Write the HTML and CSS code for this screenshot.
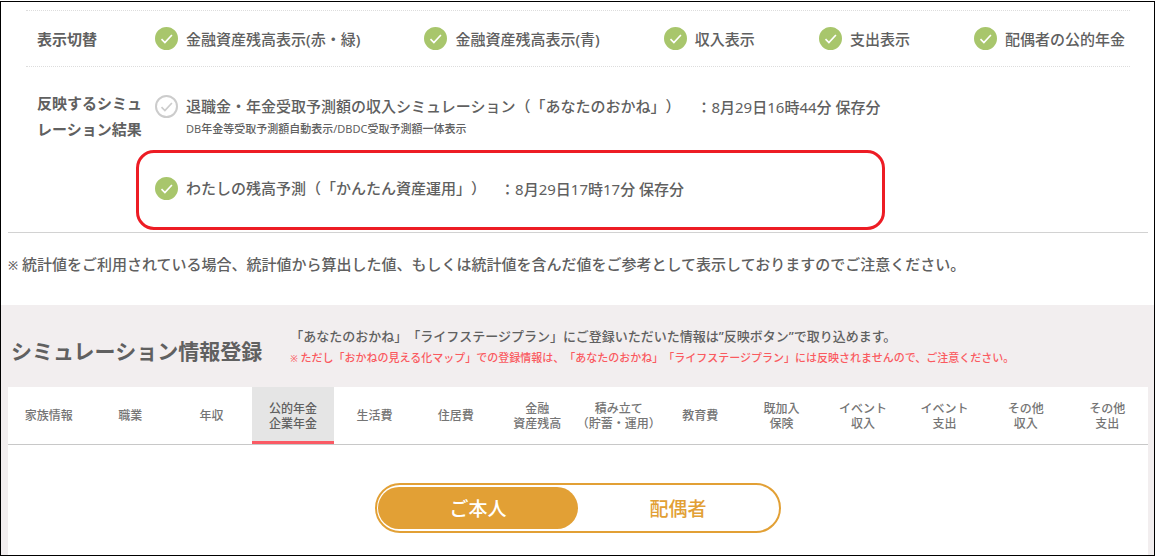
FILE: index.html
```html
<!DOCTYPE html>
<html lang="ja">
<head>
    <meta charset="UTF-8">
    <meta name="viewport" content="width=device-width, initial-scale=1.0">
    <title>シミュレーション情報登録</title>
    <link rel="stylesheet" href="styles.css">
</head>
<body>
    <div class="page">
        <!-- Display switches -->
        <section class="settings">
            <div class="switch-row">
                <h2 class="row-label">表示切替</h2>
                <div class="switches">
                    <label class="option"><input type="checkbox" class="check" checked>金融資産残高表示(赤・緑)</label>
                    <label class="option"><input type="checkbox" class="check" checked>金融資産残高表示(青)</label>
                    <label class="option"><input type="checkbox" class="check" checked>収入表示</label>
                    <label class="option"><input type="checkbox" class="check" checked>支出表示</label>
                    <label class="option"><input type="checkbox" class="check" checked>配偶者の公的年金</label>
                </div>
            </div>

            <!-- Simulation results to reflect -->
            <div class="result-row">
                <h2 class="row-label">反映するシミュレーション結果</h2>
                <div class="results">
                    <div class="result">
                        <label class="option"><input type="checkbox" class="check">退職金・年金受取予測額の収入シミュレーション（「あなたのおかね」）</label>
                        <span class="saved">：<span class="num">8</span>月<span class="num">29</span>日<span class="num">16</span>時<span class="num">44</span>分 保存分</span>
                    </div>
                    <p class="result-note"><span class="num">DB</span>年金等受取予測額自動表示<span class="num">/DBDC</span>受取予測額一体表示</p>
                    <div class="result highlight">
                        <label class="option"><input type="checkbox" class="check" checked>わたしの残高予測（「かんたん資産運用」）</label>
                        <span class="saved">：<span class="num">8</span>月<span class="num">29</span>日<span class="num">17</span>時<span class="num">17</span>分 保存分</span>
                    </div>
                </div>
            </div>
        </section>

        <p class="caution"><span class="mark">※</span> 統計値をご利用されている場合、統計値から算出した値、もしくは統計値を含んだ値をご参考として表示しておりますのでご注意ください。</p>

        <!-- Registration -->
        <section class="register">
            <header class="register-head">
                <h1 class="title">シミュレーション情報登録</h1>
                <div class="notes">
                    <p class="note">「あなたのおかね」「ライフステージプラン」にご登録いただいた情報は”反映ボタン”で取り込めます。</p>
                    <p class="note-red"><span class="mark">※</span> ただし「おかねの見える化マップ」での登録情報は、「あなたのおかね」「ライフステージプラン」には反映されませんので、ご注意ください。</p>
                </div>
            </header>

            <div class="panel">
                <nav class="tabs">
                    <a href="#" class="tab">家族情報</a>
                    <a href="#" class="tab">職業</a>
                    <a href="#" class="tab">年収</a>
                    <a href="#" class="tab active">公的年金<br>企業年金</a>
                    <a href="#" class="tab">生活費</a>
                    <a href="#" class="tab">住居費</a>
                    <a href="#" class="tab">金融<br>資産残高</a>
                    <a href="#" class="tab">積み立て<br>（貯蓄・運用）</a>
                    <a href="#" class="tab">教育費</a>
                    <a href="#" class="tab">既加入<br>保険</a>
                    <a href="#" class="tab">イベント<br>収入</a>
                    <a href="#" class="tab">イベント<br>支出</a>
                    <a href="#" class="tab">その他<br>収入</a>
                    <a href="#" class="tab">その他<br>支出</a>
                </nav>

                <div class="person-switch">
                    <button type="button" class="person selected">ご本人</button>
                    <button type="button" class="person">配偶者</button>
                </div>
            </div>
        </section>
    </div>
</body>
</html>
```
FILE: styles.css
```css
* {
    box-sizing: border-box;
}

body {
    font-family: "Noto Sans", "Noto Sans CJK JP", sans-serif;
    font-size: 15px;
    font-weight: 500;
    text-spacing-trim: space-all;
    color: #606060;
    background-color: #ffffff;
    margin: 0;
    padding: 1px 0;
    min-height: 100vh;
    display: flex;
}

h1, h2, p {
    margin: 0;
}

.page {
    flex: 1;
    min-width: 0;
    border: 1px solid #000000;
    display: flex;
    flex-direction: column;
}

/* Display switches and results */
.settings {
    margin: 8px 6px 0 7px;
    border-bottom: 1px solid #d2d2d2;
}

.switch-row,
.result-row {
    display: grid;
    grid-template-columns: 118px 1fr;
    margin: 0 18px;
    padding: 0 5px 0 11px;
}

.switch-row {
    align-items: center;
    height: 57px;
    border-top: 1px dotted #dddddd;
    border-bottom: 1px dotted #dddddd;
}

.row-label {
    font-size: 15px;
    font-weight: bold;
    line-height: 26px;
    padding-right: 12px;
}

.switches {
    display: flex;
    justify-content: space-between;
}

.option {
    display: flex;
    align-items: center;
    gap: 8px;
    line-height: 24px;
    white-space: nowrap;
    cursor: pointer;
}

/* Round check mark */
.check {
    appearance: none;
    flex: none;
    width: 23px;
    height: 23px;
    margin: 0;
    border: 2px solid #cccccc;
    border-radius: 50%;
    background: url("data:image/svg+xml,%3Csvg xmlns='http://www.w3.org/2000/svg' viewBox='0 0 23 23'%3E%3Cpath d='M6.5 12.2l3.4 3.3 7-7.5' fill='none' stroke='%23cccccc' stroke-width='1.7'/%3E%3C/svg%3E") center / 23px 23px no-repeat;
    cursor: pointer;
}

.check:checked {
    border-color: #a8c66c;
    background-color: #a8c66c;
    background-image: url("data:image/svg+xml,%3Csvg xmlns='http://www.w3.org/2000/svg' viewBox='0 0 23 23'%3E%3Cpath d='M6.5 12.2l3.4 3.3 7-7.5' fill='none' stroke='%23ffffff' stroke-width='1.7'/%3E%3C/svg%3E");
}

.result-row {
    padding-top: 23px;
}

.results {
    padding-top: 4px;
}

.result {
    display: flex;
    align-items: center;
    gap: 16px;
}

.saved {
    white-space: nowrap;
}

.num {
    font-weight: 400;
}

.result-note {
    margin-left: 31px;
    font-size: 11px;
    line-height: 22px;
}

/* Red frame round the chosen result */
.highlight {
    height: 80px;
    gap: 14px;
    margin: 10px 240px 2px -19px;
    padding: 0 0 4px 16px;
    border: 3px solid #ed1c24;
    border-radius: 18px;
}

.caution {
    padding: 19px 7px 27px;
    line-height: 24px;
}

.caution .mark {
    font-size: 12px;
}

/* Registration section */
.register {
    flex: 1;
    display: flex;
    flex-direction: column;
    padding: 0 6px 0 7px;
    background-color: #f2eeef;
}

.register-head {
    display: flex;
    align-items: center;
    gap: 28px;
    min-height: 82px;
    padding: 8px 3px 0;
}

.title {
    font-size: 21px;
    font-weight: bold;
    white-space: nowrap;
}

.notes {
    padding-bottom: 6px;
}

.note {
    font-size: 13px;
    line-height: 22px;
}

.note-red {
    font-size: 11px;
    line-height: 22px;
    color: #fa5a5f;
}

.note-red .mark {
    font-size: 9px;
}

.panel {
    flex: 1;
    background-color: #ffffff;
}

.tabs {
    display: grid;
    grid-template-columns: repeat(14, minmax(0, 1fr));
    height: 58px;
    border-bottom: 1px solid #c8c8c8;
}

.tab {
    display: flex;
    align-items: center;
    justify-content: center;
    border-bottom: 3px solid transparent;
    padding-top: 3px;
    font-size: 12px;
    line-height: 15px;
    text-align: center;
    white-space: nowrap;
    text-decoration: none;
    color: #757575;
}

.tab.active {
    background-color: #e5e5e5;
    border-bottom-color: #fa5a64;
    color: #606060;
}

.person-switch {
    display: flex;
    width: 406px;
    max-width: 100%;
    height: 50px;
    margin: 38px auto 22px;
    padding: 2px 1px;
    border: 2px solid #e2a035;
    border-radius: 25px;
}

.person {
    flex: 1;
    border: 0;
    border-radius: 22px;
    background-color: transparent;
    font-family: inherit;
    font-size: 19px;
    font-weight: 500;
    color: #e2a035;
    cursor: pointer;
}

.person.selected {
    background-color: #e2a035;
    color: #ffffff;
}
```
